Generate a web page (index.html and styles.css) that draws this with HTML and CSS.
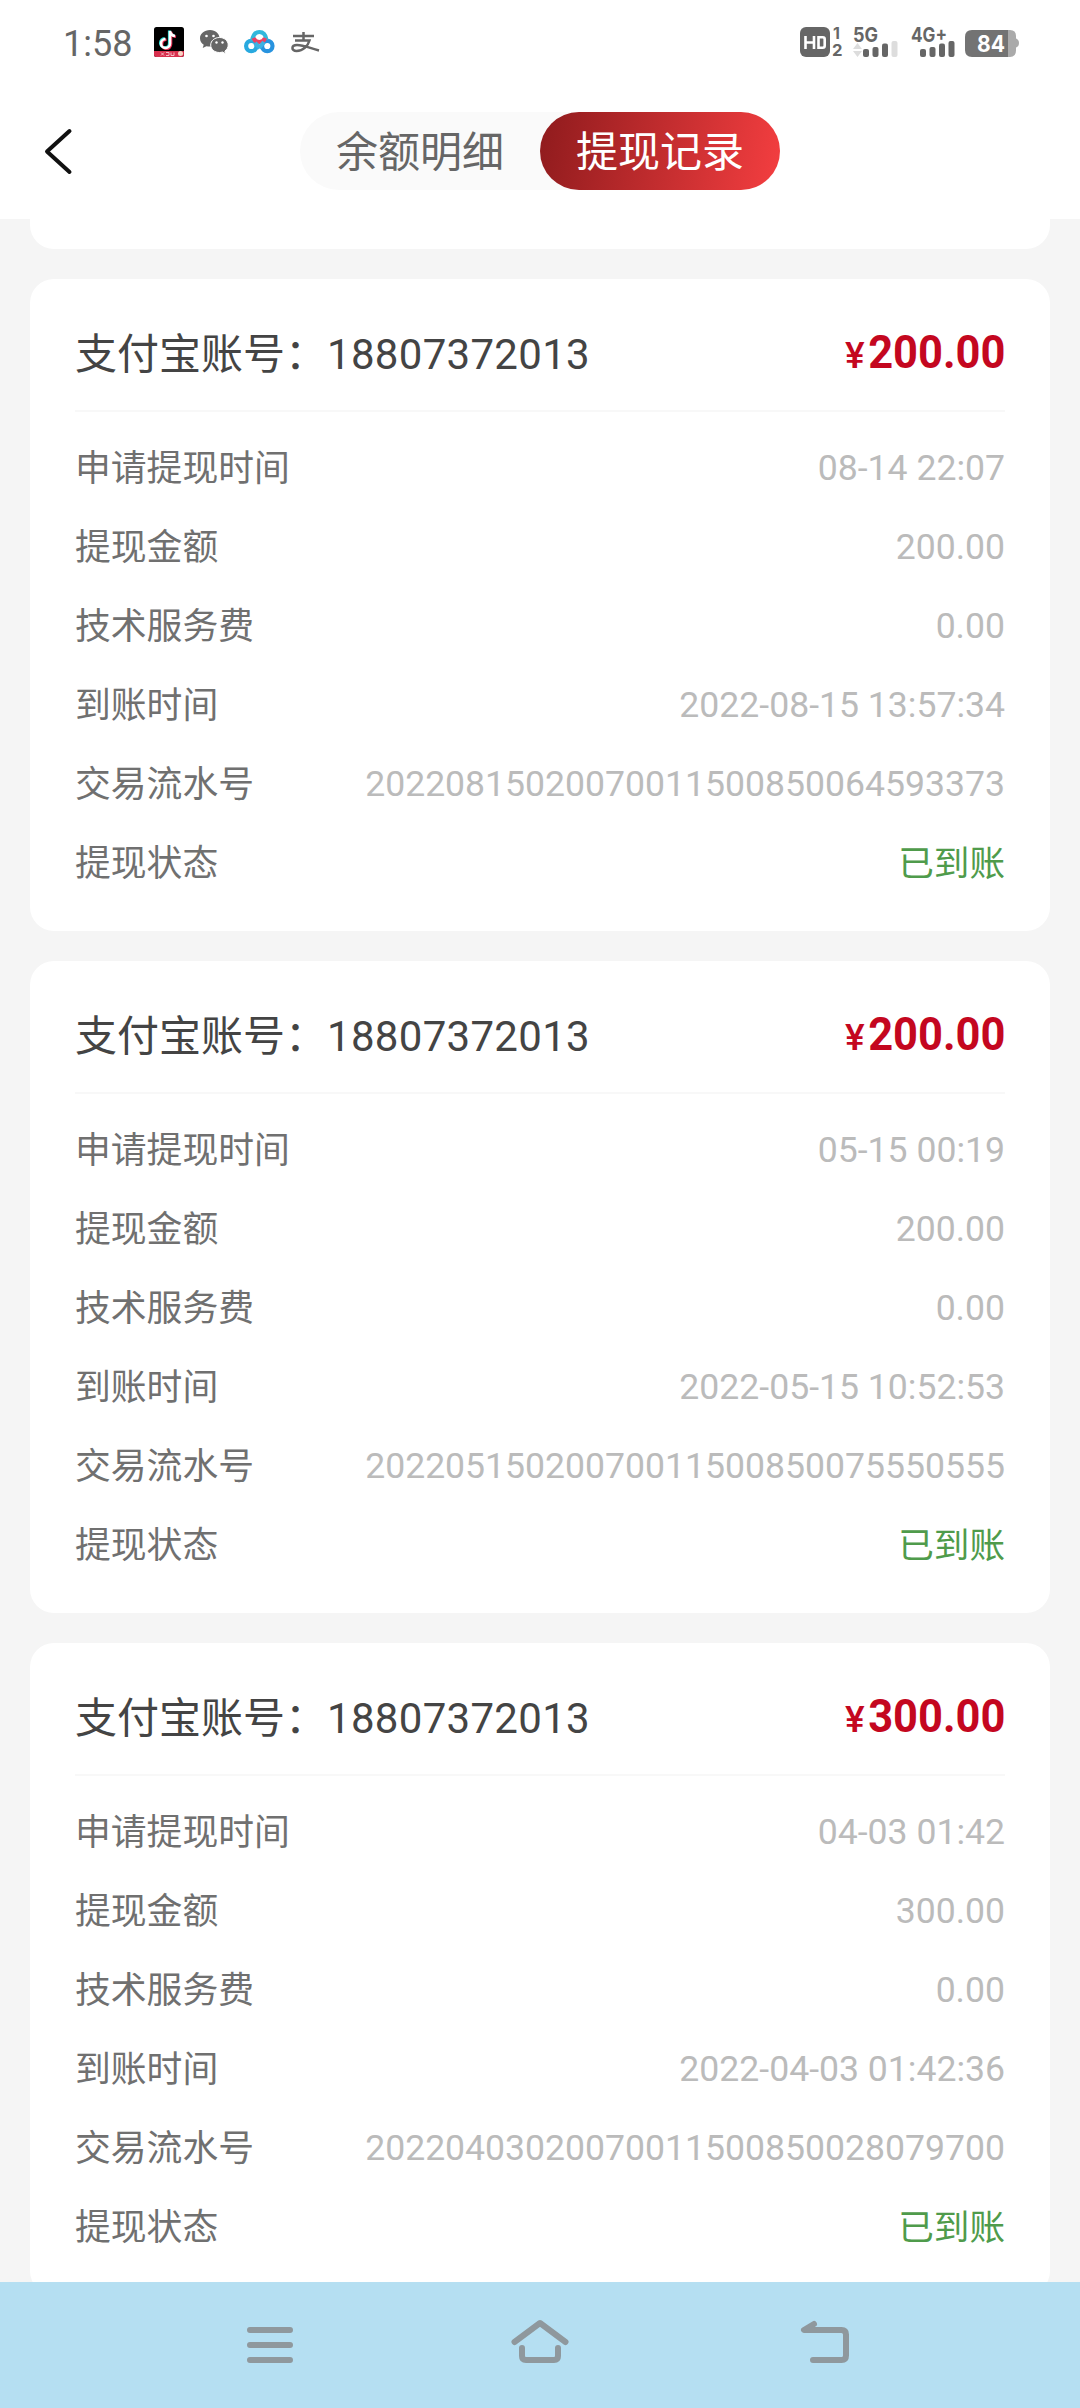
FILE: index.html
```html
<!DOCTYPE html>
<html lang="zh-CN">
<head>
<meta charset="utf-8">
<title>提现记录</title>
<link rel="stylesheet" href="styles.css">
</head>
<body>
<div class="screen">
  <div class="status">
    <span class="clock">1:58</span>
    <svg class="status-apps" width="172" height="40" viewBox="150 24 172 40">
      <rect x="154" y="27" width="30" height="30" rx="2.5" fill="#000"/>
      <path d="M154 51h30v3.500a2.500 2.500 0 0 1-2.500 2.500h-25a2.500 2.500 0 0 1-2.500-2.500z" fill="#d8304e"/>
      <path d="M161 52.500l3 3m0-3l-3 3m5-3h3v3h-3m5-3v3h3v-3" stroke="#f6b9c3" stroke-width="1" fill="none"/>
      <circle cx="180.500" cy="53.500" r="2.500" fill="#f9d3c4"/>
      <g fill="none" stroke-width="2.600">
        <path d="M170 31v12.500a4.500 4.500 0 1 1-4.500-4.500M170 31c.4 3 2 4.500 5 5" stroke="#25d6d0" transform="translate(-.8 -.6)"/>
        <path d="M170 31v12.500a4.500 4.500 0 1 1-4.500-4.500M170 31c.4 3 2 4.500 5 5" stroke="#ef3358" transform="translate(1 .8)"/>
        <path d="M170 31v12.500a4.500 4.500 0 1 1-4.500-4.500M170 31c.4 3 2 4.500 5 5" stroke="#fff"/>
      </g>
      <g fill="#666">
        <path d="M210 30c-5.800 0-10 3.700-10 8.300 0 2.700 1.400 5 3.700 6.500l-1 3.200 3.700-1.800c1.300.3 2.400.4 3.600.4 5.800 0 9.500-3.700 9.500-8.300S215.800 30 210 30z"/>
        <path d="M219.500 37.500c-5 0-8.800 3.300-8.800 7.500s3.800 7.500 8.800 7.500c1 0 2-.2 3-.5l3.200 1.800-.8-2.800c2-1.500 3.300-3.500 3.300-6 0-4.200-3.800-7.500-8.700-7.500z" stroke="#fff"/>
      </g>
      <g fill="#fff"><circle cx="206.500" cy="36" r="1.300"/><circle cx="213.500" cy="36" r="1.300"/><circle cx="216.500" cy="42.500" r="1.200"/><circle cx="222.500" cy="42.500" r="1.200"/></g>
      <g fill="none" stroke-width="4.200">
        <circle cx="251.300" cy="46" r="5.200" stroke="#28a9df"/>
        <circle cx="267.300" cy="46" r="5.200" stroke="#2893df"/>
        <path d="M252 41c1-6 3.500-9 7.300-9s6.500 3 7.300 8" stroke="#32b8dc"/>
        <path d="M253.500 38a6.200 6.200 0 0 0 11.600 0" stroke="#ea4364"/>
        <path d="M255 43l5 5M264 42l-5 6" stroke="#3eb2e2"/>
      </g>
      <path d="M293 36h21M303.500 32v8.500M295 40.500h14.500c-1.500 5-6 10.500-13 10.500-5.500 0-5.500-6 .5-6 6.500 0 12.500 3 22 5.500" fill="none" stroke="#666" stroke-width="2.500"/>
    </svg>
    <svg class="status-signals" width="224" height="40" viewBox="798 24 224 40">
      <rect x="801" y="27" width="30" height="30" rx="6" fill="#666"/>
      <path d="M806.500 36v13M815 36v13M806.500 42.500h8.500M819.500 37.300h4.200q2 0 2 2v6.400q0 2-2 2h-4.200z" fill="none" stroke="#fff" stroke-width="2.600"/>
      <g class="signal-text"><text x="834" y="39" font-size="16">1</text><text x="833" y="56" font-size="16" textLength="10.500" lengthAdjust="spacingAndGlyphs">2</text><text x="854" y="41.500" font-size="20" textLength="25" lengthAdjust="spacingAndGlyphs">5G</text><text x="912" y="41.500" font-size="20" textLength="36" lengthAdjust="spacingAndGlyphs">4G+</text></g>
      <path d="M854 49l4.500-6 4.500 6zM854 51h9l-4.500 6z" fill="#ddd"/>
      <g fill="#666"><rect x="864" y="49" width="6" height="8" rx="2"/><rect x="873.500" y="47" width="6" height="10" rx="2"/><rect x="883" y="43.500" width="6" height="13.500" rx="2"/><rect x="921" y="49" width="6" height="8" rx="2"/><rect x="930.500" y="47" width="6" height="10" rx="2"/><rect x="940" y="43.500" width="6" height="13.500" rx="2"/><rect x="949.500" y="41" width="6" height="16" rx="2"/></g>
      <rect x="892.500" y="41" width="6" height="16" rx="2" fill="#ddd"/>
      <path d="M1008 30h3q6 0 6 6v2.500q3 1 3 4.500t-3 4.500v3q0 6.500-6 6.500h-3z" fill="#aaa"/>
      <path d="M1009 30h-36q-7 0-7 7v13q0 7 7 7h36z" fill="#737373"/>
      <text x="978" y="51.500" font-size="23" textLength="28" lengthAdjust="spacingAndGlyphs" class="battery-text">84</text>
    </svg>
  </div>
  <header class="topbar">
    <svg class="back" width="36" height="52" viewBox="40 125 36 52"><path d="M69.500 131L47 151.500 69.500 172" fill="none" stroke="#111" stroke-width="4" stroke-linecap="round" stroke-linejoin="round"/></svg>
    <nav class="tabs"><a class="tab">余额明细</a><a class="tab tab-active">提现记录</a></nav>
  </header>
  <main class="list">
    <div class="card card-tail"></div>
    <section class="card">
      <div class="head"><span class="account">支付宝账号：<span class="phone">18807372013</span></span><span class="amount"><span class="yen">¥</span><span class="sum">200.00</span></span></div>
      <div class="row"><span class="label">申请提现时间</span><span class="value">08-14 22:07</span></div>
      <div class="row"><span class="label">提现金额</span><span class="value">200.00</span></div>
      <div class="row"><span class="label">技术服务费</span><span class="value">0.00</span></div>
      <div class="row"><span class="label">到账时间</span><span class="value">2022-08-15 13:57:34</span></div>
      <div class="row"><span class="label">交易流水号</span><span class="value">20220815020070011500850064593373</span></div>
      <div class="row"><span class="label">提现状态</span><span class="done">已到账</span></div>
    </section>
    <section class="card">
      <div class="head"><span class="account">支付宝账号：<span class="phone">18807372013</span></span><span class="amount"><span class="yen">¥</span><span class="sum">200.00</span></span></div>
      <div class="row"><span class="label">申请提现时间</span><span class="value">05-15 00:19</span></div>
      <div class="row"><span class="label">提现金额</span><span class="value">200.00</span></div>
      <div class="row"><span class="label">技术服务费</span><span class="value">0.00</span></div>
      <div class="row"><span class="label">到账时间</span><span class="value">2022-05-15 10:52:53</span></div>
      <div class="row"><span class="label">交易流水号</span><span class="value">20220515020070011500850075550555</span></div>
      <div class="row"><span class="label">提现状态</span><span class="done">已到账</span></div>
    </section>
    <section class="card">
      <div class="head"><span class="account">支付宝账号：<span class="phone">18807372013</span></span><span class="amount"><span class="yen">¥</span><span class="sum">300.00</span></span></div>
      <div class="row"><span class="label">申请提现时间</span><span class="value">04-03 01:42</span></div>
      <div class="row"><span class="label">提现金额</span><span class="value">300.00</span></div>
      <div class="row"><span class="label">技术服务费</span><span class="value">0.00</span></div>
      <div class="row"><span class="label">到账时间</span><span class="value">2022-04-03 01:42:36</span></div>
      <div class="row"><span class="label">交易流水号</span><span class="value">20220403020070011500850028079700</span></div>
      <div class="row"><span class="label">提现状态</span><span class="done">已到账</span></div>
    </section>
  </main>
  <footer class="navbar">
    <svg width="60" height="60" viewBox="240 2315 60 60"><path d="M250 2330h40M250 2345h40M250 2360h40"/></svg>
    <svg width="60" height="60" viewBox="510 2315 60 60"><path d="M514.500 2342L540 2323 565.500 2342M522 2348v8q0 4 4 4h28q4 0 4-4v-8"/></svg>
    <svg width="60" height="60" viewBox="795 2315 60 60"><path d="M814 2324L804 2330h37.500q4.500 0 4.500 4.500v21q0 4.500-4.500 4.500h-28.500"/></svg>
  </footer>
</div>
</body>
</html>
```

FILE: styles.css
```css
* { box-sizing: border-box; }
body {
  margin: 0;
  font-family: Roboto, "Noto Sans CJK SC", sans-serif;
  background: #f5f5f5;
}
.screen {
  width: 1080px;
  height: 2408px;
  display: flex;
  flex-direction: column;
  overflow: hidden;
}
.status {
  height: 88px;
  flex: none;
  display: flex;
  align-items: flex-start;
  padding: 24px 59px 0 63px;
  background: #fff;
}
.clock {
  width: 87px;
  font-size: 36px;
  line-height: 40px;
  color: #666;
}
.status-signals { margin-left: auto; }
.signal-text { font-family: Inter, sans-serif; font-weight: 700; fill: #666; }
.battery-text { font-family: Inter, sans-serif; font-weight: 700; fill: #fff; }
.topbar {
  height: 131px;
  flex: none;
  display: grid;
  grid-template-columns: 1fr 480px 1fr;
  align-items: start;
  padding: 24px 0 0;
  background: #fff;
}
.back { margin: 13px 0 0 40px; }
.tabs {
  display: flex;
  height: 78px;
  border-radius: 39px;
  background: #fafafa;
}
.tab {
  width: 240px;
  height: 78px;
  padding-top: 3px;
  border-radius: 39px;
  font-size: 42px;
  line-height: 76px;
  text-align: center;
  color: #666;
}
.tab-active {
  color: #fff;
  background: linear-gradient(100deg, #8f1b1d, #f43e40);
}
.list {
  flex: 1;
  min-height: 0;
  overflow: hidden;
  padding: 0 30px;
}
.card {
  height: 652px;
  margin-bottom: 30px;
  padding: 0 45px;
  border-radius: 24px;
  background: #fff;
}
.card-tail {
  height: 30px;
  border-radius: 0 0 24px 24px;
}
.head {
  height: 133px;
  margin-bottom: 16px;
  padding-top: 15px;
  display: flex;
  align-items: center;
  justify-content: space-between;
  border-bottom: 2px solid #f8f8f8;
}
.account { font-size: 42px; color: #444; padding-bottom: 3px; }
.phone { letter-spacing: .3px; }
.amount { color: #c4071f; white-space: nowrap; padding-bottom: 1px; }
.yen { font-size: 37px; font-weight: 500; }
.sum {
  display: inline-block;
  margin-left: -8px;
  font-size: 47px;
  font-weight: 700;
  transform: scaleX(.925);
  transform-origin: right;
}
.row {
  height: 79px;
  display: flex;
  align-items: center;
  justify-content: space-between;
  font-size: 35.6px;
  color: #707070;
}
.label { font-size: 35.8px; padding-bottom: 5px; }
.value { color: #bbb; padding-top: 1px; }
.done { color: #4f9b4b; padding-bottom: 5px; }
.navbar {
  height: 126px;
  flex: none;
  display: flex;
  gap: 210px;
  padding: 33px 0 0 240px;
  background: #b5dff2;
}
.navbar svg:last-child { margin-left: 15px; }
.navbar svg {
  fill: none;
  stroke: #8f989d;
  stroke-width: 6;
  stroke-linecap: round;
  stroke-linejoin: round;
}
```
